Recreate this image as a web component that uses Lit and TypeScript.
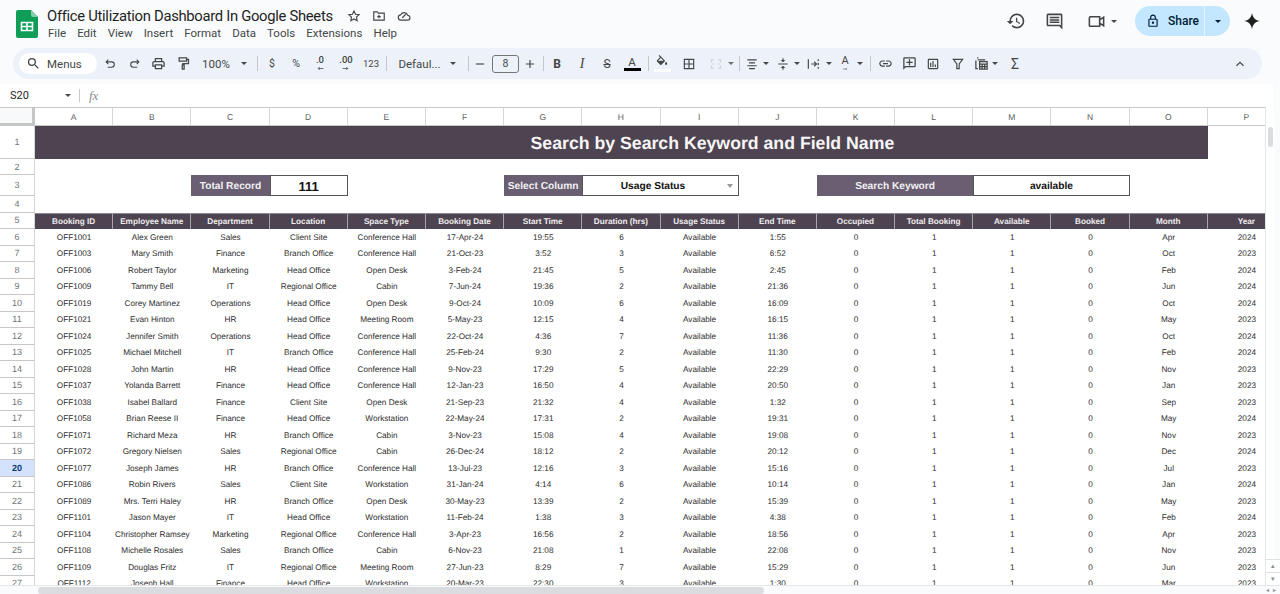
import { LitElement, html, css, TemplateResult } from "lit";
import { customElement } from "lit/decorators.js";
import { classMap } from "lit/directives/class-map.js";
import { styleMap } from "lit/directives/style-map.js";

const COLS = "ABCDEFGHIJKLMNOP".split("");
const HEADERS = [
  "Booking ID", "Employee Name", "Department", "Location", "Space Type", "Booking Date", "Start Time",
  "Duration (hrs)", "Usage Status", "End Time", "Occupied", "Total Booking", "Available", "Booked", "Month", "Year",
];

// id, name, department, location, space, date, start, duration, end, month, year
const ROWS: string[][] = [
  ["OFF1001", "Alex Green", "Sales", "Client Site", "Conference Hall", "17-Apr-24", "19:55", "6", "1:55", "Apr", "2024"],
  ["OFF1003", "Mary Smith", "Finance", "Branch Office", "Conference Hall", "21-Oct-23", "3:52", "3", "6:52", "Oct", "2023"],
  ["OFF1006", "Robert Taylor", "Marketing", "Head Office", "Open Desk", "3-Feb-24", "21:45", "5", "2:45", "Feb", "2024"],
  ["OFF1009", "Tammy Bell", "IT", "Regional Office", "Cabin", "7-Jun-24", "19:36", "2", "21:36", "Jun", "2024"],
  ["OFF1019", "Corey Martinez", "Operations", "Head Office", "Open Desk", "9-Oct-24", "10:09", "6", "16:09", "Oct", "2024"],
  ["OFF1021", "Evan Hinton", "HR", "Head Office", "Meeting Room", "5-May-23", "12:15", "4", "16:15", "May", "2023"],
  ["OFF1024", "Jennifer Smith", "Operations", "Head Office", "Conference Hall", "22-Oct-24", "4:36", "7", "11:36", "Oct", "2024"],
  ["OFF1025", "Michael Mitchell", "IT", "Branch Office", "Conference Hall", "25-Feb-24", "9:30", "2", "11:30", "Feb", "2024"],
  ["OFF1028", "John Martin", "HR", "Head Office", "Conference Hall", "9-Nov-23", "17:29", "5", "22:29", "Nov", "2023"],
  ["OFF1037", "Yolanda Barrett", "Finance", "Head Office", "Conference Hall", "12-Jan-23", "16:50", "4", "20:50", "Jan", "2023"],
  ["OFF1038", "Isabel Ballard", "Finance", "Client Site", "Open Desk", "21-Sep-23", "21:32", "4", "1:32", "Sep", "2023"],
  ["OFF1058", "Brian Reese II", "Finance", "Head Office", "Workstation", "22-May-24", "17:31", "2", "19:31", "May", "2024"],
  ["OFF1071", "Richard Meza", "HR", "Branch Office", "Cabin", "3-Nov-23", "15:08", "4", "19:08", "Nov", "2023"],
  ["OFF1072", "Gregory Nielsen", "Sales", "Regional Office", "Cabin", "26-Dec-24", "18:12", "2", "20:12", "Dec", "2024"],
  ["OFF1077", "Joseph James", "HR", "Branch Office", "Conference Hall", "13-Jul-23", "12:16", "3", "15:16", "Jul", "2023"],
  ["OFF1086", "Robin Rivers", "Sales", "Client Site", "Workstation", "31-Jan-24", "4:14", "6", "10:14", "Jan", "2024"],
  ["OFF1089", "Mrs. Terri Haley", "HR", "Branch Office", "Open Desk", "30-May-23", "13:39", "2", "15:39", "May", "2023"],
  ["OFF1101", "Jason Mayer", "IT", "Head Office", "Workstation", "11-Feb-24", "1:38", "3", "4:38", "Feb", "2024"],
  ["OFF1104", "Christopher Ramsey", "Marketing", "Regional Office", "Conference Hall", "3-Apr-23", "16:56", "2", "18:56", "Apr", "2023"],
  ["OFF1108", "Michelle Rosales", "Sales", "Branch Office", "Cabin", "6-Nov-23", "21:08", "1", "22:08", "Nov", "2023"],
  ["OFF1109", "Douglas Fritz", "IT", "Regional Office", "Meeting Room", "27-Jun-23", "8:29", "7", "15:29", "Jun", "2023"],
  ["OFF1112", "Joseph Hall", "Finance", "Head Office", "Workstation", "20-Mar-23", "22:30", "3", "1:30", "Mar", "2023"],
];

const fill = (d: string, size = 15) =>
  html`<svg class="ic" width=${size} height=${size} viewBox="0 0 24 24" fill="currentColor"><path d=${d}></path></svg>`;
const line = (d: string, size = 15) =>
  html`<svg class="ic" width=${size} height=${size} viewBox="0 0 24 24" fill="none" stroke="currentColor" stroke-width="2"><path d=${d}></path></svg>`;

const P = {
  search: "M15.5 14h-.79l-.28-.27A6.471 6.471 0 0 0 16 9.5 6.5 6.5 0 1 0 9.5 16c1.61 0 3.09-.59 4.23-1.57l.27.28v.79l5 4.99L20.49 19l-4.99-5zm-6 0C7.01 14 5 11.99 5 9.5S7.01 5 9.5 5 14 7.01 14 9.5 11.99 14 9.5 14z",
  undo: "M8 5L4 9l4 4M4 9h10a5 5 0 0 1 0 10H7",
  redo: "M16 5l4 4-4 4M20 9H10a5 5 0 0 0 0 10h7",
  print: "M19 8h-1V3H6v5H5c-1.66 0-3 1.34-3 3v6h4v4h12v-4h4v-6c0-1.66-1.34-3-3-3zM8 5h8v3H8V5zm8 14H8v-4h8v4zm2-4v-2H6v2H4v-4c0-.55.45-1 1-1h14c.55 0 1 .45 1 1v4h-2z",
  paint: "M5 3h12v5H5zM17 5.500h3V12h-9v2M10 14h3v7h-3z",
  minus: "M5 12h14",
  plus: "M12 5v14M5 12h14",
  fillc: "M16.56 8.940 7.620 0 6.210 1.410l2.380 2.380-5.150 5.150a1.490 1.490 0 0 0 0 2.120l5.500 5.500c.29.29.68.44 1.060.44s.77-.15 1.060-.44l5.500-5.500c.59-.58.59-1.530 0-2.120zM5.210 10 10 5.210 14.790 10H5.210zM19 11.500s-2 2.170-2 3.500c0 1.100.9 2 2 2s2-.9 2-2c0-1.330-2-3.500-2-3.500z",
  borders: "M4 4h16v16H4zM12 4v16M4 12h16",
  merge: "M4 5v4M4 15v4M4 19h4M4 5h4M20 5v4M20 15v4M20 19h-4M20 5h-4M8 12l-3 0M16 12l3 0",
  align: "M4 5h16M7 10h10M4 15h16M7 20h10",
  valign: "M8 19h3v3h2v-3h3l-4-4-4 4zm8-14h-3V2h-2v3H8l4 4 4-4zM4 11v2h16v-2H4z",
  wrap: "M4 4v16M9 12h9M14 8l4 4-4 4M21 4v3M21 10v4M21 17v3",
  link: "M3.900 12c0-1.710 1.390-3.100 3.100-3.100h4V7H7c-2.760 0-5 2.240-5 5s2.240 5 5 5h4v-1.900H7c-1.710 0-3.100-1.390-3.100-3.100zM8 13h8v-2H8v2zm9-6h-4v1.900h4c1.710 0 3.100 1.390 3.100 3.100s-1.390 3.100-3.100 3.100h-4V17h4c2.760 0 5-2.240 5-5s-2.240-5-5-5z",
  comment: "M20 2H4c-1.100 0-2 .9-2 2v18l4-4h14c1.100 0 2-.9 2-2V4c0-1.100-.9-2-2-2zm0 14H5.170L4 17.170V4h16v12zM13 5h-2v4H7v2h4v4h2v-4h4V9h-4z",
  chart: "M19 3H5c-1.100 0-2 .9-2 2v14c0 1.100.9 2 2 2h14c1.100 0 2-.9 2-2V5c0-1.100-.9-2-2-2zm0 16H5V5h14v14zM7 10h2v7H7zm4-3h2v10h-2zm4 6h2v4h-2z",
  filter: "M4 4h16l-6 8v8h-4v-8z",
  table: "M3 7v13h3M7 3h-1v1M9 9h12v12H9zM9 13h12M9 17h12M13 13v8M17 13v8M6 6h12",
  up: "M6 15l6-6 6 6",
  star: "M12 3.500l2.600 5.600 6.100.7-4.500 4.200 1.200 6-5.400-3-5.400 3 1.200-6-4.500-4.200 6.100-.7z",
  folder: "M3 5h6l2 2h10v12H3zM12 10v6M9 13h6",
  cloud: "M7 19a4.500 4.500 0 0 1-.6-9A6.500 6.500 0 0 1 18.500 11a4 4 0 0 1-.5 8zM9 15l6-6",
  history: "M13 3a9 9 0 0 0-9 9H1l3.890 3.890.07.14L9 12H6c0-3.870 3.130-7 7-7s7 3.130 7 7-3.130 7-7 7c-1.930 0-3.680-.79-4.940-2.060l-1.420 1.420A8.954 8.954 0 0 0 13 21a9 9 0 0 0 0-18zm-1 5v5l4.280 2.540.72-1.210-3.500-2.080V8H12z",
  chat: "M21.990 4c0-1.100-.89-2-1.990-2H4c-1.100 0-2 .9-2 2v12c0 1.100.9 2 2 2h14l4 4-.01-18zM20 4v13.170L18.830 16H4V4h16zM6 12h12v2H6zm0-3h12v2H6zm0-3h12v2H6z",
  video: "M4 6h12v12H4a1 1 0 0 1-1-1V8a2 2 0 0 1 1-2zM16 10l5-3.500v11L16 14",
  lock: "M18 8h-1V6c0-2.760-2.240-5-5-5S7 3.240 7 6v2H6c-1.100 0-2 .9-2 2v10c0 1.100.9 2 2 2h12c1.100 0 2-.9 2-2V10c0-1.100-.9-2-2-2zM9 6c0-1.660 1.340-3 3-3s3 1.340 3 3v2H9V6zm9 14H6V10h12v10zm-6-3c1.100 0 2-.9 2-2s-.9-2-2-2-2 .9-2 2 .9 2 2 2z",
  spark: "M12 1C12.800 7.500 16.500 11.200 23 12C16.500 12.800 12.800 16.500 12 23C11.200 16.500 7.500 12.800 1 12C7.500 11.200 11.200 7.500 12 1Z",
};

const tool = (w: number, content: unknown, cls = "") =>
  html`<div class="tool ${cls}" style=${styleMap({ width: `${w}px` })}>${content}</div>`;
const caret = (w: number, cls = "") => tool(w, html`<span class="caret"></span>`, cls);
const sep = (w: number) => tool(w, html`<span class="sep"></span>`);
const decimal = (w: number, label: string, arrow: string) =>
  tool(w, html`<div class="dec"><span>${label}</span>${line(arrow, 9)}</div>`);

const tools = (): TemplateResult => html`
  ${tool(26, line(P.undo, 13))} ${tool(22, line(P.redo, 13))} ${tool(26, fill(P.print))} ${tool(24, line(P.paint))}
  ${tool(42, "100%", "txt")} ${caret(14)} ${sep(12)}
  ${tool(18, "$", "sym")} ${tool(30, "%", "sym")}
  ${decimal(18, ".0", "M20 12H6M10 8l-4 4 4 4")} ${decimal(34, ".00", "M4 12h14M14 8l4 4-4 4")}
  ${tool(16, "123", "num")} ${sep(14)}
  ${tool(53, "Defaul...", "txt")} ${caret(14)} ${sep(16)}
  ${tool(8, line(P.minus, 14))}
  <div class="size">8</div>
  ${tool(22, line(P.plus, 14))} ${sep(4)}
  ${tool(24, "B", "fmt bold")} ${tool(26, "I", "fmt italic")}
  ${tool(24, "S", "fmt strike")}
  ${tool(26, html`<div class="color"><span>A</span><i></i></div>`)} ${sep(6)}
  ${tool(22, html`<div class="fillc">${fill(P.fillc, 14)}<i></i></div>`)}
  ${tool(32, line(P.borders, 14))} ${tool(22, line(P.merge, 14), "off")} ${caret(8, "off")} ${sep(8)}
  ${tool(18, line(P.align, 14))} ${caret(10)}
  ${tool(24, fill(P.valign, 14))} ${caret(4)}
  ${tool(28, line(P.wrap, 14))} ${caret(4)}
  ${tool(28, html`<div class="rotate"><span>A</span>${line("M3 12h16M15 8l4 4-4 4", 12)}</div>`)} ${caret(2)} ${sep(18)}
  ${tool(12, fill(P.link))} ${tool(36, fill(P.comment))} ${tool(12, fill(P.chart, 14))}
  ${tool(38, line(P.filter, 14))} ${tool(8, line(P.table))} ${caret(20)}
  ${tool(20, "Σ", "sigma")}
`;

@customElement("app-root")
export class AppRoot extends LitElement {
  private renderRow(num: number, cells: unknown) {
    return html`<div class=${classMap({ rh: true, sel: num === 20 })}>${num}</div>${cells}`;
  }

  private renderData(r: string[], i: number) {
    const vals = [...r.slice(0, 8), "Available", r[8], "0", "1", "1", "0", r[9], r[10]];
    return this.renderRow(i + 6, vals.map((v) => html`<div class="c">${v}</div>`));
  }

  render() {
    return html`
      <div class="top">
        <header>
          <svg class="logo" width="22" height="28" viewBox="0 0 22 28">
            <path d="M2 0h13l7 7v19a2 2 0 0 1-2 2H2a2 2 0 0 1-2-2V2a2 2 0 0 1 2-2z" fill="#0f9d58"></path>
            <path d="M15 0l7 7h-5a2 2 0 0 1-2-2z" fill="#87ceac"></path>
            <path d="M5.500 12.500h11v8h-11zM11 12.500v8M5.500 16.500h11" fill="none" stroke="#fff" stroke-width="1.600"></path>
          </svg>
          <div class="names">
            <div class="doc">
              <span class="title">Office Utilization Dashboard In Google Sheets</span>
              <span class="doc-icons">${line(P.star, 14)}${line(P.folder, 14)}${line(P.cloud, 14)}</span>
            </div>
            <nav>
              ${["File", "Edit", "View", "Insert", "Format", "Data", "Tools", "Extensions", "Help"].map(
                (m) => html`<span>${m}</span>`,
              )}
            </nav>
          </div>
          <div class="actions">
            <span class="hist">${fill(P.history, 20)}</span>
            ${fill(P.chat, 19)}
            <div class="meet">${line(P.video, 19)}<span class="caret"></span></div>
            <div class="share">
              <div class="share-main">${fill(P.lock, 14)}<span>Share</span></div>
              <div class="share-more"><span class="caret dark"></span></div>
            </div>
            <span class="spark">${fill(P.spark, 18)}</span>
          </div>
        </header>
        <div class="toolbar">
          <div class="menus">${fill(P.search, 15)}<span>Menus</span></div>
          ${tools()}
          <div class="grow"></div>
          ${tool(24, line(P.up, 14))}
        </div>
      </div>
      <div class="fbar">
        <span class="ref">S20</span><span class="caret"></span><span class="sep"></span><span class="fx">fx</span>
      </div>
      <div class="main">
        <div class="sheet">
          <div class="corner"></div>
          ${COLS.map((c) => html`<div class="ch">${c}</div>`)}
          ${this.renderRow(1, html`<div class="banner">Search by Search Keyword and Field Name</div>`)}
          ${this.renderRow(2, "")}
          ${this.renderRow(
            3,
            html`
              <div class="lbl c-c">Total Record</div>
              <div class="val big c-d">111</div>
              <div class="lbl c-g">Select Column</div>
              <div class="val c-hi"><span>Usage Status</span><span class="arrow"></span></div>
              <div class="lbl c-kl">Search Keyword</div>
              <div class="val c-mn">available</div>
            `,
          )}
          ${this.renderRow(4, "")}
          ${this.renderRow(5, HEADERS.map((h) => html`<div class="th">${h}</div>`))}
          ${ROWS.map((r, i) => this.renderData(r, i))}
        </div>
        <div class="vscroll">
          <div class="thumb"></div>
          <div class="grow"></div>
          <div class="vbtn">▴</div>
          <div class="vbtn">▾</div>
        </div>
      </div>
      <div class="hscroll">
        <div class="hthumb"></div>
        <div class="grow"></div>
        <span class="hbtn">◂</span><span class="hbtn">▸</span>
      </div>
    `;
  }

  static styles = css`
    :host {
      display: flex;
      flex-direction: column;
      width: 1280px;
      height: 594px;
      overflow: hidden;
      background: #f9fbfd;
      font-family: Roboto, "Liberation Sans", sans-serif;
      color: #444746;
    }
    .ic {
      display: block;
      flex: none;
    }
    .grow {
      flex: 1;
    }
    .top {
      height: 84px;
      flex: none;
    }
    header {
      height: 48px;
      display: flex;
      align-items: flex-start;
    }
    .logo {
      margin: 10px 9px 0 16px;
      flex: none;
    }
    .names {
      padding-top: 5px;
    }
    .doc {
      display: flex;
      align-items: center;
      height: 22px;
    }
    .title {
      font-size: 14.800px;
      letter-spacing: -0.3px;
      color: #1f1f1f;
      white-space: nowrap;
    }
    .doc-icons {
      display: flex;
      gap: 11px;
      margin-left: 14px;
      color: #444746;
    }
    nav {
      display: flex;
      gap: 11.100px;
      font-size: 11.500px;
      margin-top: -1px;
      padding-left: 1px;
      color: #444746;
    }
    .actions {
      margin-left: auto;
      display: flex;
      align-items: center;
      height: 42px;
      color: #444746;
    }
    .hist {
      margin-right: 18.500px;
    }
    .meet {
      display: flex;
      align-items: center;
      gap: 5px;
      margin-left: 23px;
      margin-right: 18.500px;
    }
    .share {
      display: flex;
      width: 95px;
      height: 30px;
      border-radius: 15px;
      background: #c2e7ff;
      color: #001d35;
      overflow: hidden;
    }
    .share-main {
      flex: 1;
      display: flex;
      align-items: center;
      gap: 8px;
      padding-left: 11px;
      font-size: 12px;
      font-weight: 500;
      border-right: 1px solid #e6f4ff;
    }
    .share-more {
      width: 25px;
      display: flex;
      align-items: center;
      justify-content: center;
    }
    .spark {
      margin: 0 19px 0 13px;
      color: #1f1f1f;
    }
    .caret {
      display: block;
      flex: none;
      width: 0;
      height: 0;
      border-left: 3.500px solid transparent;
      border-right: 3.500px solid transparent;
      border-top: 3.500px solid #444746;
    }
    .caret.dark {
      border-top-color: #001d35;
    }
    .toolbar {
      height: 31px;
      margin: 0 18px 0 13px;
      padding: 0 10px 0 6px;
      display: flex;
      align-items: center;
      background: #edf2fa;
      border-radius: 16px;
    }
    .menus {
      width: 78px;
      height: 21px;
      flex: none;
      box-sizing: border-box;
      padding-left: 7px;
      display: flex;
      align-items: center;
      gap: 6px;
      background: #fff;
      border-radius: 11px;
      font-size: 11.500px;
    }
    .tool {
      flex: none;
      height: 31px;
      display: flex;
      align-items: center;
      justify-content: center;
      font-size: 11px;
      white-space: nowrap;
    }
    .tool .ic,
    .tool > * {
      flex: none;
    }
    .tool.off {
      color: #c0c4c8;
      opacity: 0.75;
    }
    .txt {
      font-size: 11.500px;
    }
    .sym {
      font-size: 10.500px;
    }
    .num {
      font-size: 9.500px;
    }
    .sep {
      display: block;
      flex: none;
      width: 1px;
      height: 15px;
      background: #c7c7c7;
    }
    .dec {
      display: flex;
      flex-direction: column;
      align-items: center;
      font-size: 9.500px;
      font-weight: 500;
      line-height: 9px;
    }
    .size {
      flex: none;
      box-sizing: border-box;
      width: 27px;
      height: 18px;
      margin-left: 8px;
      border: 1px solid #747775;
      border-radius: 3px;
      font-size: 10.500px;
      line-height: 16px;
      text-align: center;
    }
    .fmt {
      font-size: 12px;
    }
    .bold {
      font-weight: 700;
    }
    .italic {
      font-family: "Liberation Serif", serif;
      font-style: italic;
      font-size: 14px;
    }
    .strike {
      text-decoration: line-through;
    }
    .color {
      display: flex;
      flex-direction: column;
      align-items: center;
      font-size: 11.500px;
      line-height: 12px;
    }
    .color i {
      display: block;
      width: 17px;
      height: 3px;
      background: #000;
    }
    .fillc {
      display: flex;
      flex-direction: column;
      align-items: center;
    }
    .fillc i {
      display: block;
      width: 17px;
      height: 3px;
      background: #fff;
    }
    .rotate {
      display: flex;
      flex-direction: column;
      align-items: center;
      font-size: 11px;
      line-height: 10px;
    }
    .rotate .ic {
      height: 6px;
    }
    .sigma {
      font-size: 14px;
    }
    .fbar {
      height: 23px;
      flex: none;
      margin-right: 7px;
      background: #fff;
      display: flex;
      align-items: center;
      font-size: 11px;
      color: #1f1f1f;
    }
    .ref {
      width: 55px;
      padding-left: 10px;
    }
    .fbar .sep {
      margin-left: 8px;
      height: 13px;
    }
    .fx {
      margin-left: 9px;
      font-family: "Liberation Serif", serif;
      font-style: italic;
      font-size: 13px;
      color: #8a8d90;
    }
    .main {
      height: 478px;
      flex: none;
      display: flex;
    }
    .sheet {
      width: 1265px;
      flex: none;
      overflow: hidden;
      background: #fff;
      display: grid;
      grid-template-columns: 35px repeat(16, 78.200px);
      grid-template-rows: 19px 33px 16px 21px 16.500px 16.500px;
      grid-auto-rows: 16.500px;
      font-family: "Liberation Sans", Arial, sans-serif;
      font-size: 8.200px;
      color: #2e2e2e;
      text-rendering: geometricPrecision;
    }
    .sheet > div {
      display: flex;
      align-items: center;
      justify-content: center;
      min-width: 0;
      white-space: nowrap;
      box-sizing: border-box;
    }
    .corner {
      background: #f8f9fa;
      border-top: 1px solid #c7c7c7;
      border-right: 3px solid #c4c7c5;
      border-bottom: 3px solid #c4c7c5;
    }
    .ch {
      font-size: 8.500px;
      color: #575a5e;
      background: #fff;
      border-top: 1px solid #c7c7c7;
      border-right: 1px solid #d6d6d6;
      border-bottom: 1px solid #c7c7c7;
    }
    .rh {
      grid-column: 1;
      font-size: 9px;
      color: #70757a;
      background: #fff;
      border-right: 1px solid #d6d6d6;
      border-bottom: 1px solid #c7c7c7;
    }
    .rh.sel {
      background: #d3e3fd;
      color: #0b3a74;
      font-weight: 700;
    }
    .banner {
      grid-column: 2 / span 15;
      box-sizing: border-box;
      padding: 1px 0 0 182px;
      background: #4e4350;
      color: #f7f6f7;
      font-size: 17.700px;
      font-weight: 700;
    }
    .lbl {
      padding-top: 1px;
      background: #695e72;
      color: #f2f0f3;
      font-size: 10.200px;
      font-weight: 700;
    }
    .val {
      padding-top: 1px;
      background: #fff;
      border: 1px solid #555;
      color: #111;
      font-size: 10.200px;
      font-weight: 700;
    }
    .big {
      font-size: 13px;
    }
    .c-c {
      grid-column: 4;
    }
    .c-d {
      grid-column: 5;
    }
    .c-g {
      grid-column: 8;
    }
    .c-hi {
      grid-column: 9 / span 2;
      position: relative;
      padding-right: 15px;
    }
    .arrow {
      position: absolute;
      right: 5px;
      top: 8px;
      width: 0;
      height: 0;
      border-left: 3.500px solid transparent;
      border-right: 3.500px solid transparent;
      border-top: 4px solid #999;
    }
    .c-kl {
      grid-column: 12 / span 2;
    }
    .c-mn {
      grid-column: 14 / span 2;
    }
    .th {
      background: #4e4350;
      color: #eeecef;
      font-size: 8.200px;
      font-weight: 700;
      border-top: 1px solid #8d8690;
      border-right: 1px solid #a8a3aa;
    }
    .vscroll {
      width: 15px;
      flex: none;
      display: flex;
      flex-direction: column;
      align-items: stretch;
      background: linear-gradient(90deg, #fff 8px, #f9fbfd 8px);
      border-left: 1px solid #e4e6e8;
      box-sizing: border-box;
    }
    .thumb {
      width: 5px;
      height: 20px;
      margin: 20px 0 0 2px;
      border-radius: 3px;
      background: #dadce0;
    }
    .vbtn {
      height: 12px;
      border-top: 1px solid #e0e0e0;
      font-size: 7px;
      line-height: 12px;
      text-align: center;
      color: #8a8d90;
      background: #fff;
    }
    .hscroll {
      height: 9px;
      flex: none;
      box-sizing: border-box;
      display: flex;
      align-items: center;
      padding: 0 2px 0 38px;
      border-top: 1px solid #e4e6e8;
      background: #fafbfc;
    }
    .hthumb {
      width: 726px;
      height: 7px;
      border-radius: 4px;
      background: #dadce0;
    }
    .hbtn {
      width: 7px;
      font-size: 6px;
      line-height: 8px;
      text-align: center;
      color: #8a8d90;
    }
  `;
}
